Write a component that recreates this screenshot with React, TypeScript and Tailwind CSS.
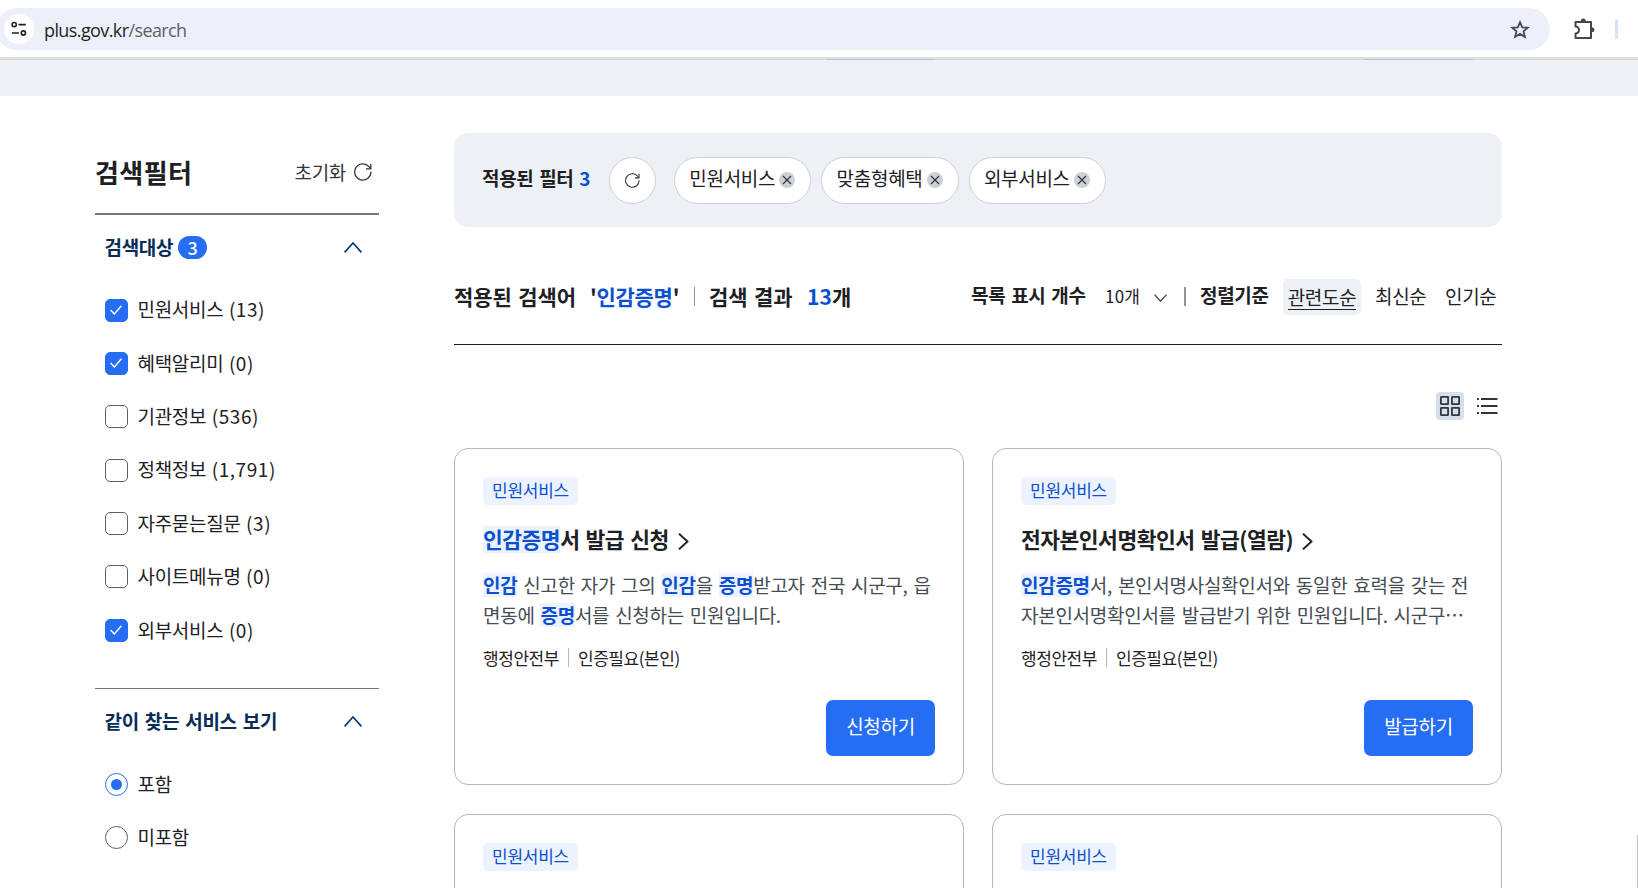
import { useState } from 'react';
import clsx from 'clsx';

const targets = [
  { name: '민원서비스', count: '13', checked: true },
  { name: '혜택알리미', count: '0', checked: true },
  { name: '기관정보', count: '536', checked: false },
  { name: '정책정보', count: '1,791', checked: false },
  { name: '자주묻는질문', count: '3', checked: false },
  { name: '사이트메뉴명', count: '0', checked: false },
  { name: '외부서비스', count: '0', checked: true },
];

const chips = ['민원서비스', '맞춤형혜택', '외부서비스'];

// Text wrapped in asterisks is a search hit
const results = [
  {
    title: '*인감증명*서 발급 신청',
    lines: [
      '*인감* 신고한 자가 그의 *인감*을 *증명*받고자 전국 시군구, 읍',
      '면동에 *증명*서를 신청하는 민원입니다.',
    ],
    action: '신청하기',
  },
  {
    title: '전자본인서명확인서 발급(열람)',
    lines: [
      '*인감증명*서, 본인서명사실확인서와 동일한 효력을 갖는 전',
      '자본인서명확인서를 발급받기 위한 민원입니다. 시군구⋯',
    ],
    action: '발급하기',
  },
];

function Hits({ text }: { text: string }) {
  return (
    <>
      {text.split('*').map((part, i) =>
        i % 2 ? (
          <mark key={i} className="inline-block bg-[#ecf2fe] leading-[1.25] font-bold text-[#0b50d0]">
            {part}
          </mark>
        ) : (
          part
        ),
      )}
    </>
  );
}

function ReloadIcon({ className }: { className?: string }) {
  return (
    <svg viewBox="0 0 18 18" fill="none" stroke="currentColor" className={className}>
      <path d="M16.9 8.6A8.1 8.1 0 1 1 14.9 3.6L16.6 5.6" strokeWidth="1.3" />
      <path d="M16.8 1V5.8H12" strokeWidth="1.3" />
    </svg>
  );
}

function ChevronUp() {
  return (
    <svg viewBox="0 0 18 11" fill="none" stroke="#063a74" strokeWidth="1.7" className="h-[11px] w-[18px]">
      <path d="M.6 10.4L9 1L17.4 10.4" />
    </svg>
  );
}

function Browser() {
  return (
    <header className="flex h-[60px] flex-col bg-white">
      <div className="flex h-[57px] items-center pt-px">
        <div className="-ml-1 flex h-[42px] w-[1554px] items-center rounded-full bg-[#ecf0fa] pr-5 pl-2">
          <div className="flex h-[30px] w-[30px] items-center justify-center rounded-full bg-white">
            <svg viewBox="0 0 16 16" fill="none" stroke="#1f1f1f" strokeWidth="1.6" className="h-4 w-4">
              <circle cx="3.2" cy="3.6" r="2.1" />
              <path d="M7.5 3.6H14.8M.8 12H8" />
              <circle cx="12.4" cy="12" r="2.1" />
            </svg>
          </div>
          <span className="ml-2.5 pt-px text-[18px] leading-none font-normal tracking-[-0.6px] text-[#1f1f1f] font-['Open_Sans',sans-serif]">
            plus.gov.kr<span className="text-[#5c6066]">/search</span>
          </span>
          <svg viewBox="0 0 20 19" fill="none" stroke="#474747" strokeWidth="1.8" className="ml-auto h-[19px] w-5">
            <path d="M10 2.2L12.2 7.3L17.8 7.7L13.5 11.4L14.9 16.9L10 13.9L5.1 16.9L6.5 11.4L2.2 7.7L7.8 7.3Z" />
          </svg>
        </div>
        <svg viewBox="0 0 22 22" fill="none" stroke="#474747" strokeWidth="2" className="mb-px ml-[23px] h-[22px] w-[22px]">
          <path d="M2.5 4H18V20H2.5V15.5A3.2 3.2 0 0 0 2.5 8.5Z" strokeLinejoin="round" />
          <path d="M7.8 3A2.5 2.5 0 0 1 12.8 3ZM19 9.2A2.5 2.5 0 0 1 19 14.2Z" fill="#474747" stroke="none" />
        </svg>
        <div className="ml-5 h-5 w-[3px] rounded-full bg-[#d3e3fd]" />
      </div>
      <div className="h-0.5 bg-[#dfe1e1]" />
      <div className="flex h-px gap-[429px] bg-[#d3d9da] pl-[826px]">
        <div className="w-[109px] bg-[#b3c4dc]" />
        <div className="w-[109px] bg-[#b3c4dc]" />
      </div>
    </header>
  );
}

function Sidebar() {
  const [checked, setChecked] = useState(targets.map((t) => t.checked));
  const [together, setTogether] = useState('포함');

  return (
    <aside className="w-[284px]">
      {/* Title */}
      <div className="flex h-[119px] items-end justify-between border-b-2 border-[#6d7882] pb-[25px]">
        <h2 className="text-[26px] leading-8 font-bold tracking-[0.4px]">검색필터</h2>
        <button className="flex h-8 items-center gap-2 pr-[7px] text-[#33363d]">
          <span className="text-[19px] tracking-[-0.3px]">초기화</span>
          <ReloadIcon className="h-[18px] w-[18px]" />
        </button>
      </div>

      {/* Search targets */}
      <div className="flex h-[66px] items-center justify-between pr-[17px] pb-px pl-[9.5px]">
        <h3 className="flex items-center gap-[5px] text-[19px] font-bold tracking-[-0.3px] text-[#052b57]">
          검색대상
          <span className="flex h-[23px] w-[29px] items-center justify-center rounded-full bg-[#256ef4] text-[18px] font-medium tracking-normal text-white">
            3
          </span>
        </h3>
        <ChevronUp />
      </div>
      <ul className="flex h-[408px] flex-col gap-[23.4px] border-b border-[#6d7882] pt-[14px] pl-2.5">
        {targets.map((item, i) => (
          <li key={item.name} className="h-[30px]">
            <label className="flex h-full items-center gap-[9.5px] text-[19px] tracking-[-0.3px]">
              <input
                type="checkbox"
                className="peer sr-only"
                checked={checked[i]}
                onChange={() => setChecked(checked.map((c, j) => (j === i ? !c : c)))}
              />
              <span
                className={clsx(
                  'flex h-[23px] w-[23px] items-center justify-center rounded-[5px] border',
                  checked[i] ? 'border-[#256ef4] bg-[#256ef4]' : 'border-[#58616a] bg-white',
                )}
              >
                {checked[i] && (
                  <svg viewBox="0 0 12 10" fill="none" stroke="white" strokeWidth="1.4" className="mr-px h-2.5 w-3">
                    <path d="M.6 5L4.4 9L11.4 .8" />
                  </svg>
                )}
              </span>
              <span className="pb-px [word-spacing:1.5px]">
                {item.name} <span className="tracking-[0.55px]">({item.count})</span>
              </span>
            </label>
          </li>
        ))}
      </ul>

      {/* Related services */}
      <div className="flex h-[66px] items-center justify-between pr-[17px] pb-px pl-[9.5px]">
        <h3 className="text-[19px] font-bold tracking-[-0.25px] text-[#052b57] [word-spacing:1.8px]">
          같이 찾는 서비스 보기
        </h3>
        <ChevronUp />
      </div>
      <div className="flex flex-col gap-[23.4px] pt-[14px] pl-2.5">
        {['포함', '미포함'].map((name) => (
          <label key={name} className="flex h-[30px] items-center gap-[9.5px] text-[19px] tracking-[-0.3px]">
            <input
              type="radio"
              name="together"
              className="peer sr-only"
              checked={together === name}
              onChange={() => setTogether(name)}
            />
            <span
              className={clsx(
                'flex h-[23px] w-[23px] items-center justify-center rounded-full border',
                together === name ? 'border-[#256ef4]' : 'border-[#58616a]',
              )}
            >
              {together === name && <span className="h-[11px] w-[11px] rounded-full bg-[#256ef4]" />}
            </span>
            {name}
          </label>
        ))}
      </div>
    </aside>
  );
}

function FilterBar() {
  return (
    <div className="flex h-[94px] items-center rounded-[14px] bg-[#edf1f5] pl-7">
      <p className="w-[127px] pb-[3px] text-[19px] font-bold tracking-[-0.3px] whitespace-nowrap [word-spacing:1.6px]">
        적용된 필터 <span className="text-[#0b50d0]">3</span>
      </p>
      <button className="mr-[18px] flex h-[47px] w-[47px] items-center justify-center rounded-full border border-[#cdd1d5] bg-white text-[#33363d]">
        <ReloadIcon className="h-[15px] w-[15px]" />
      </button>
      <div className="flex gap-2.5">
        {chips.map((chip) => (
          <span
            key={chip}
            className="flex h-[47px] w-[137.3px] items-center gap-1 rounded-full border border-[#cdd1d5] bg-white pb-[3px] pl-[14.3px] text-[19px] tracking-[-0.3px]"
          >
            {chip}
            <svg viewBox="0 0 16 16" className="mt-[3px] h-4 w-4">
              <circle cx="8" cy="8" r="8" fill="#cdd1d5" />
              <path d="M4 4L12 12M12 4L4 12" stroke="#33363d" strokeWidth="1.2" />
            </svg>
          </span>
        ))}
      </div>
    </div>
  );
}

function ResultHeader() {
  return (
    <div className="flex h-[118px] items-center border-b border-[#1e2124] pt-[22px] whitespace-nowrap">
      <p className="flex items-center text-[21px] font-bold tracking-[-0.1px] [word-spacing:1.9px]">
        <span className="w-[136px]">적용된 검색어</span>
        <span className="w-[104px] tracking-[-0.3px]">
          '<span className="text-[#0b50d0]">인감증명</span>'
        </span>
        <span className="mr-3.5 h-[19px] w-px bg-[#8a949e]" />
        <span className="w-[98px]">검색 결과</span>
        <span className="tracking-[0.1px]">
          <span className="text-[#0b50d0]">13</span>개
        </span>
      </p>
      <div className="ml-auto flex items-center text-[19px] tracking-[-0.3px]">
        <b className="w-[134px] pb-0.5 [word-spacing:1.8px]">목록 표시 개수</b>
        <span className="w-[49px] pb-px text-[17px] tracking-[0.2px]">10개</span>
        <svg viewBox="0 0 13 8" fill="none" stroke="#33363d" strokeWidth="1.2" className="mt-0.5 mr-px h-2 w-[13px]">
          <path d="M.5 .7L6.5 7.2L12.5 .7" />
        </svg>
        <span className="mr-3.5 ml-4 h-[19px] w-0.5 bg-[#8a949e]" />
        <b className="w-[83px] pb-0.5">정렬기준</b>
        <span className="mr-3.5 flex h-9 w-[78px] items-center justify-center rounded-[5px] bg-[#edf1f5]">
          <span className="border-b border-[#1e2124] leading-[25px]">관련도순</span>
        </span>
        <span className="w-[70px]">최신순</span>
        <span className="w-[57px]">인기순</span>
      </div>
    </div>
  );
}

function ViewToggle() {
  return (
    <div className="mt-[47px] flex h-7 items-center justify-end gap-3 pr-1">
      <button className="flex h-7 w-7 items-center justify-center rounded bg-[#d6e0eb]">
        <svg viewBox="0 0 20 20" fill="none" stroke="#33363d" strokeWidth="1.8" className="h-5 w-5">
          <rect x=".9" y=".9" width="7.2" height="7.2" rx=".4" />
          <rect x="11.9" y=".9" width="7.2" height="7.2" rx=".4" />
          <rect x=".9" y="11.9" width="7.2" height="7.2" rx=".4" />
          <rect x="11.9" y="11.9" width="7.2" height="7.2" rx=".4" />
        </svg>
      </button>
      <button>
        <svg viewBox="0 0 22 18" fill="none" stroke="#33363d" strokeWidth="2" className="h-[18px] w-[22px]">
          <path d="M1 2H3M5 2H21.5M1 9H3M5 9H21.5M1 16H3M5 16H21.5" />
        </svg>
      </button>
    </div>
  );
}

function Tag() {
  return (
    <span className="flex h-7 w-[95px] items-center justify-center rounded-[5px] bg-[#ecf2fe] pb-0.5 text-[17px] tracking-[-0.27px] text-[#0b50d0]">
      민원서비스
    </span>
  );
}

function Card({ item }: { item: (typeof results)[number] }) {
  return (
    <article className="flex h-[337px] flex-col rounded-[14px] border border-[#b1b8be] px-7 pt-7">
      <Tag />
      <h3 className="mt-[18px] flex h-[34px] items-center gap-[9px] text-[21.5px] font-bold tracking-[-0.5px] whitespace-nowrap [word-spacing:1.8px]">
        <span className="pb-px">
          <Hits text={item.title} />
        </span>
        <svg viewBox="0 0 11 17" fill="none" stroke="#1e2124" strokeWidth="1.9" className="mt-0.5 h-[17px] w-[11px]">
          <path d="M1 .8L9.5 8.5L1 16.2" />
        </svg>
      </h3>
      <div className="mt-[13px] text-[19px] leading-[30px] tracking-[-0.28px] whitespace-nowrap text-[#464c53] [word-spacing:1.9px]">
        {item.lines.map((line) => (
          <p key={line}>
            <Hits text={line} />
          </p>
        ))}
      </div>
      <p className="mt-[15.4px] flex h-6 items-center text-[17px] tracking-[-0.45px]">
        행정안전부
        <span className="mx-[9px] h-[19px] w-px bg-[#b1b8be]" />
        인증필요(본인)
      </p>
      <button className="mt-[30.6px] flex h-14 w-[109px] items-center justify-center self-end rounded-[7px] bg-[#256ef4] pb-[3px] text-[19px] tracking-[-0.3px] text-white">
        {item.action}
      </button>
    </article>
  );
}

export default function App() {
  return (
    <div className="relative h-screen overflow-hidden bg-white text-[#1e2124] font-['Noto_Sans_CJK_KR',sans-serif]">
      <Browser />
      <div className="h-9 bg-[#edf0f5]" />
      <div className="flex items-start gap-[75px] pl-[95px]">
        <Sidebar />
        <main className="w-[1048px] pt-[37px]">
          <FilterBar />
          <ResultHeader />
          <ViewToggle />
          <div className="mt-7 grid grid-cols-2 gap-x-7 gap-y-[29px]">
            {results.map((item) => (
              <Card key={item.title} item={item} />
            ))}
            {[3, 4].map((n) => (
              <article key={n} className="h-[337px] rounded-[14px] border border-[#b1b8be] px-7 pt-7">
                <Tag />
              </article>
            ))}
          </div>
        </main>
      </div>
      {/* Floating panel, mostly off screen */}
      <div className="absolute right-0 bottom-0 h-[53px] w-px bg-[#c4c4c4] shadow-[0_0_8px_rgba(0,0,0,0.12)]" />
    </div>
  );
}
